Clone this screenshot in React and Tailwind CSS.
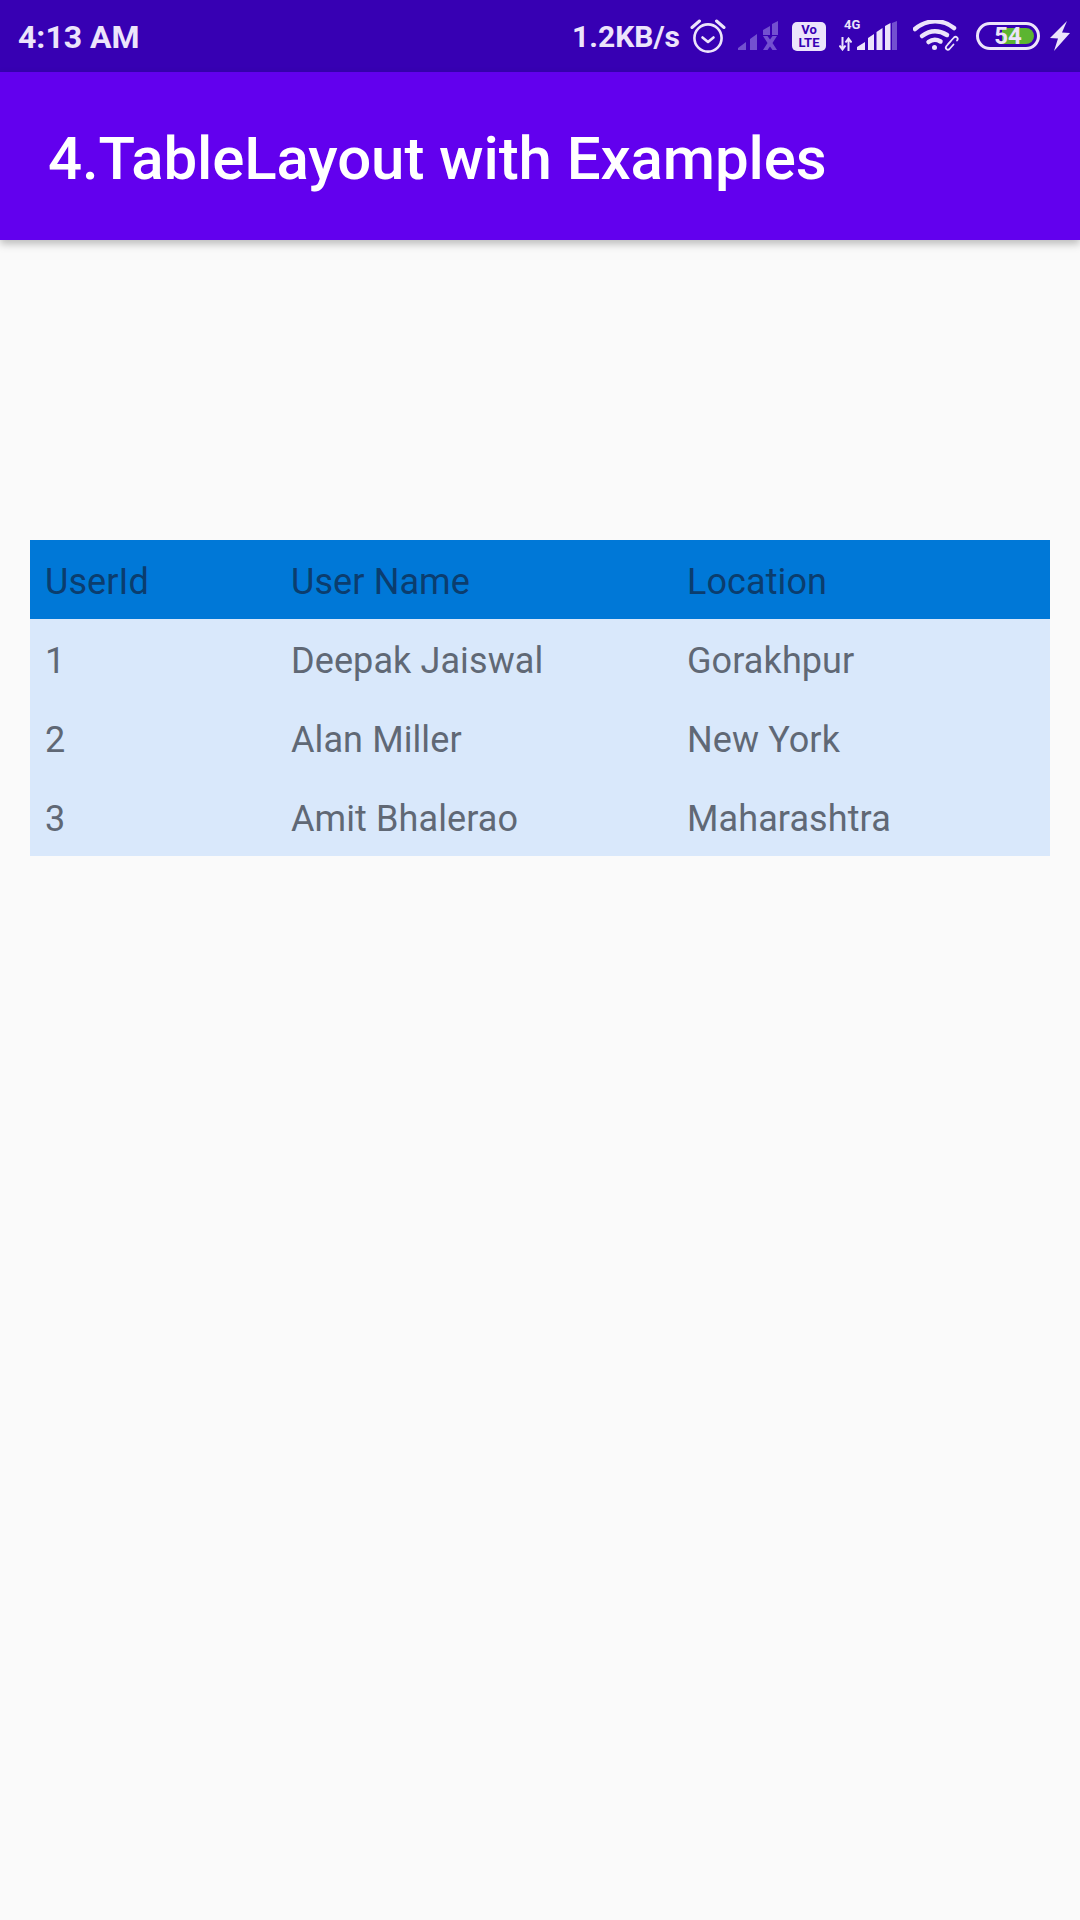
const rows = [
  ['1', 'Deepak Jaiswal', 'Gorakhpur'],
  ['2', 'Alan Miller', 'New York'],
  ['3', 'Amit Bhalerao', 'Maharashtra'],
];

function TableRow({ cells, className }) {
  return (
    <div className={`grid grid-cols-[246px_396px_1fr] h-[79px] items-center text-[36px] leading-none tracking-[0.1px] ${className}`}>
      {cells.map((cell) => (
        <div key={cell} className="pl-[15px] pt-[4px]">{cell}</div>
      ))}
    </div>
  );
}

function AlarmIcon() {
  return (
    <svg width="36" height="36" viewBox="0 0 36 36" fill="none" stroke="#ece4fb" strokeWidth="2.6">
      <circle cx="18" cy="20" r="13.6" />
      <path d="M12.5 19.5 18 24l5.5-4.5" strokeLinecap="round" strokeLinejoin="round" />
      <path d="M2 9.5 9.5 3M34 9.5 26.5 3" strokeWidth="3" strokeLinecap="round" />
    </svg>
  );
}

function SimOffIcon() {
  return (
    <svg width="42" height="30" viewBox="0 0 42 30" fill="#7350d0">
      <path d="M0 29v-2l8-6v8zM12 29V18l7-5v16zM25 14V9l7-4v9zM34 14V3l6-3v14z" />
      <path d="M25 15h4.500L32 18.500 34.500 15H39l-4.500 7 4.500 7h-4.500L32 25.500 29.500 29H25l4.500-7z" />
    </svg>
  );
}

function VolteBadge() {
  return (
    <div className="flex h-[29px] w-[34px] flex-col items-center justify-center rounded-[5px] bg-[#ece4fb] text-[#3700b3] text-[13px] leading-[13px] font-bold">
      <span>Vo</span>
      <span>LTE</span>
    </div>
  );
}

function DataArrows() {
  return (
    <svg width="13" height="14" viewBox="0 0 13 14" fill="none" stroke="#ece4fb" strokeWidth="2">
      <path d="M3.500 0v12M0.500 8.500l3 4 3-4" />
      <path d="M9.500 14V2M6.500 5.500l3-4 3 4" />
    </svg>
  );
}

function SignalIcon() {
  return (
    <svg width="40" height="30" viewBox="0 0 40 30" fill="#ece4fb">
      <path d="M0 29v-3l8-5v8zM11 29V17l6-4v16zM19.500 29V11l6-4v22zM28 29V5l5.500-3v27z" />
      <path d="M35 2l5-2v29h-5z" fill="#7350d0" />
    </svg>
  );
}

function WifiIcon() {
  return (
    <svg width="48" height="32" viewBox="0 0 48 32" fill="none" stroke="#ece4fb" strokeLinecap="round">
      <path d="M2 9C14-1 30-1 41 8" strokeWidth="4.500" />
      <path d="M9 16c8-6 17-6 25-1" strokeWidth="4.500" />
      <path d="M15.500 22c4-3 8-3 12-.5" strokeWidth="4.500" />
      <circle cx="21.500" cy="27.500" r="2.500" fill="#ece4fb" stroke="none" />
      <path d="M35 27l6-6.500c2-2 5 .5 3 3M38 24l-4.500 5c-2 2.500 1 5 3 3l4-4.500" strokeWidth="1.800" transform="translate(0 -3)" />
    </svg>
  );
}

function BoltIcon() {
  return (
    <svg width="20" height="30" viewBox="0 0 20 30" fill="#ece4fb">
      <path d="M17 0 0 17l8 .5L4 30 20 12l-8-.5z" />
    </svg>
  );
}

export default function App() {
  return (
    <div className="flex h-[1920px] w-[1080px] flex-col bg-[#fafafa] font-['Roboto',sans-serif]">
      {/* status bar */}
      <div className="flex h-[72px] items-center justify-between bg-[#3700b3] pl-[18px] pr-[10px] text-[#ece4fb]">
        <span className="text-[32px] leading-none font-bold pt-[1px]">4:13 AM</span>
        <div className="flex items-center">
          <span className="text-[30px] leading-none font-bold pt-[1px]">1.2KB/s</span>
          <div className="ml-[10px]"><AlarmIcon /></div>
          <div className="ml-[12px]"><SimOffIcon /></div>
          <div className="ml-[12px]"><VolteBadge /></div>
          <div className="relative ml-[13px] flex h-[30px] w-[58px] justify-end">
            <span className="absolute left-[5px] top-[-3px] text-[13px] leading-none font-bold">4G</span>
            <div className="absolute left-0 bottom-0"><DataArrows /></div>
            <SignalIcon />
          </div>
          <div className="ml-[16px]"><WifiIcon /></div>
          <div className="relative ml-[15px] flex h-[28px] w-[64px] items-center rounded-full border-[3px] border-[#ece4fb] p-[3px]">
            <div className="ml-[20px] h-full w-[32px] rounded-r-full bg-[#5cb531]" />
            <span className="absolute inset-0 flex items-center justify-center text-[24px] leading-none font-bold text-[#ece4fb]">54</span>
          </div>
          <div className="ml-[10px]"><BoltIcon /></div>
        </div>
      </div>

      {/* app bar */}
      <div className="relative flex h-[168px] items-center bg-[#6200ee] pl-[48px] pt-[6px] shadow-[0_4px_8px_rgba(0,0,0,0.25)]">
        <h1 className="text-[60px] leading-none font-medium tracking-[-0.1px] text-white">4.TableLayout with Examples</h1>
      </div>

      {/* table */}
      <div className="mx-[30px] mt-[300px] bg-[#d9e8fb]">
        <TableRow cells={['UserId', 'User Name', 'Location']} className="bg-[#0078d7] text-[#0b3d6e]" />
        {rows.map((row) => (
          <TableRow key={row[0]} cells={row} className="text-[#606875]" />
        ))}
      </div>
    </div>
  );
}
